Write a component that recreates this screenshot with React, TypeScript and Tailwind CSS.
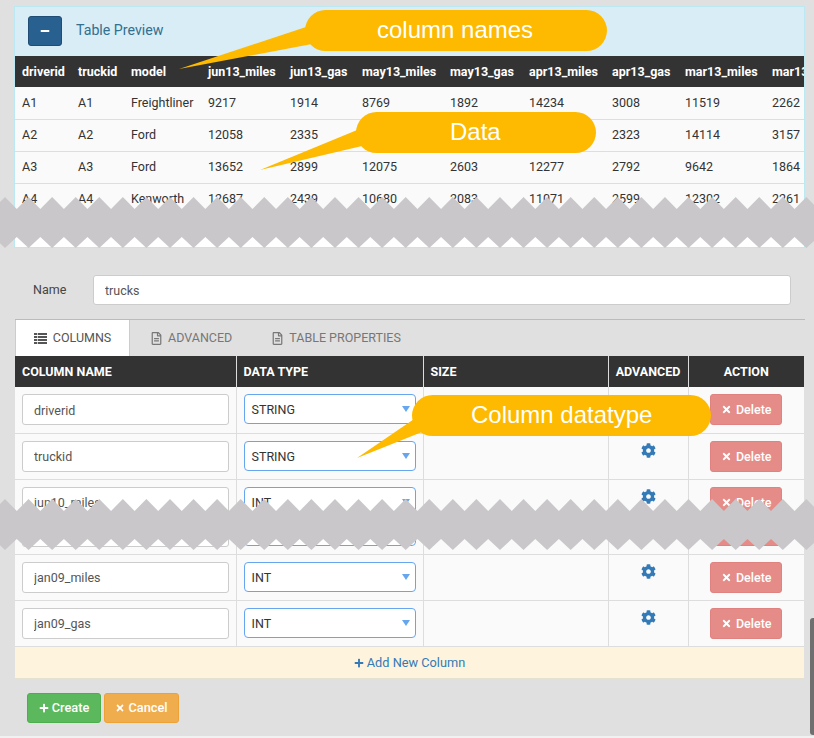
import React from "react";
import { FaCog, FaMinus, FaPlus, FaRegFileAlt, FaTimes } from "react-icons/fa";

const previewHead = ["driverid", "truckid", "model", "jun13_miles", "jun13_gas", "may13_miles", "may13_gas", "apr13_miles", "apr13_gas", "mar13_miles", "mar13_gas"];
const previewRows = [
  ["A1", "A1", "Freightliner", "9217", "1914", "8769", "1892", "14234", "3008", "11519", "2262"],
  ["A2", "A2", "Ford", "12058", "2335", "", "", "", "2323", "14114", "3157"],
  ["A3", "A3", "Ford", "13652", "2899", "12075", "2603", "12277", "2792", "9642", "1864"],
  ["A4", "A4", "Kenworth", "12687", "2439", "10680", "2083", "11071", "2599", "12302", "2261"],
];

const columns = [
  { name: "driverid", type: "STRING", tall: false },
  { name: "truckid", type: "STRING", tall: false },
  { name: "jun10_miles", type: "INT", tall: true },
  { name: "jan09_miles", type: "INT", tall: false },
  { name: "jan09_gas", type: "INT", tall: false },
];

const Band = ({ top }: { top: string }) => {
  const teeth = Array.from({ length: 36 }, (_, i) => i);
  const upper = teeth.map((i) => `${5 + i * 23.57 - 11.8},12 ${5 + i * 23.57},0`).join(" ");
  const lower = [...teeth].reverse().map((i) => `${5 + i * 23.57},51 ${5 + i * 23.57 - 11.8},40`).join(" ");
  return (
    <svg className={`absolute left-0 ${top}`} width="814" height="52" viewBox="0 0 814 52">
      <polygon points={`${upper} ${lower}`} fill="#c9c7ca" />
    </svg>
  );
};

const Callout = ({ box, text, tail, textClass }: { box: string; text: string; tail: string; textClass: string }) => (
  <>
    <svg className="absolute left-0 top-0" width="814" height="738" viewBox="0 0 814 738">
      <polygon points={tail} fill="#fdba00" />
    </svg>
    <div className={`absolute h-[41px] pb-[2px] rounded-[21px] bg-[#fdba00] flex items-center text-white text-[24px] font-['Liberation_Sans',sans-serif] ${box} ${textClass}`}>
      {text}
    </div>
  </>
);

const ListIcon = () => (
  <svg width="13" height="11" viewBox="0 0 13 11" fill="currentColor">
    <rect x="0" y="0" width="13" height="2" />
    <rect x="0" y="3" width="13" height="2" />
    <rect x="0" y="6" width="13" height="2" />
    <rect x="0" y="9" width="13" height="2" />
    <rect x="3" y="0" width="1" height="11" fill="#fff" opacity="0.7" />
  </svg>
);

export default function App() {
  return (
    <div className="relative w-[814px] h-[738px] overflow-hidden bg-[#e0e0e0] font-['Roboto',sans-serif] text-[12.5px] text-[#333]">
      {/* preview panel */}
      <div className="ml-[14px] mt-[6px] w-[791px] h-[242px] border border-[#bce8f1] bg-white overflow-hidden">
        <div className="h-[49px] bg-[#d9edf7] flex items-center pl-[13px] pb-[2px]">
          <button className="w-[34px] h-[30px] rounded-[3px] bg-[#286090] border border-[#204d74] text-white flex items-center justify-center">
            <FaMinus size={10} />
          </button>
          <span className="ml-[14px] text-[14.2px] text-[#31708f]">Table Preview</span>
        </div>
        <table className="table-fixed w-[840px]">
          <colgroup>
            <col className="w-[56px]" />
            <col className="w-[53px]" />
            <col className="w-[77px]" />
            <col className="w-[82px]" />
            <col className="w-[72px]" />
            <col className="w-[88px]" />
            <col className="w-[79px]" />
            <col className="w-[83px]" />
            <col className="w-[73px]" />
            <col className="w-[87px]" />
            <col className="w-[90px]" />
          </colgroup>
          <thead>
            <tr className="h-[31px] bg-[#333] text-white">
              {previewHead.map((h) => (
                <th key={h} className="pl-[7px] pt-[1px] text-left font-bold text-[12.5px] whitespace-nowrap overflow-hidden">
                  {h}
                </th>
              ))}
            </tr>
          </thead>
          <tbody>
            {previewRows.map((row) => (
              <tr key={row[0]} className="h-[32px] bg-[#fafafa] border-b border-[#dedede]">
                {row.map((cell, i) => (
                  <td key={i} className="pl-[7px] pt-[1px] whitespace-nowrap">
                    {cell}
                  </td>
                ))}
              </tr>
            ))}
          </tbody>
        </table>
      </div>

      {/* name */}
      <div className="mt-[27px] flex items-center ml-[33px] w-[758px]">
        <label className="w-[60px] text-[#444]">Name</label>
        <input
          readOnly
          value="trucks"
          className="flex-1 h-[30px] rounded-[3px] border border-[#ccc] bg-white pl-[11px] text-[12.5px] text-[#555]"
        />
      </div>

      {/* tabs */}
      <div className="mt-[14px] ml-[15px] w-[790px] h-[37px] border-t border-[#bbb] flex items-end text-[#777]">
        <div className="w-[115px] h-[36px] bg-white border-x border-[#ccc] flex items-center justify-center gap-[6px] text-[#555]">
          <ListIcon />
          COLUMNS
        </div>
        <div className="h-[36px] ml-[20px] flex items-center gap-[5px]">
          <FaRegFileAlt size={13} />
          ADVANCED
        </div>
        <div className="h-[36px] ml-[39px] flex items-center gap-[5px]">
          <FaRegFileAlt size={13} />
          TABLE PROPERTIES
        </div>
      </div>

      {/* columns table */}
      <table className="ml-[15px] table-fixed w-[789px]">
        <colgroup>
          <col className="w-[221px]" />
          <col className="w-[187px]" />
          <col className="w-[185px]" />
          <col className="w-[80px]" />
          <col className="w-[116px]" />
        </colgroup>
        <thead>
          <tr className="h-[31px] bg-[#333] text-white text-[12.5px] font-bold">
            <th className="pl-[7px] pt-[1px] text-left border-r border-[#ddd]">COLUMN NAME</th>
            <th className="pl-[7px] pt-[1px] text-left border-r border-[#ddd]">DATA TYPE</th>
            <th className="pl-[7px] pt-[1px] text-left border-r border-[#ddd]">SIZE</th>
            <th className="pt-[1px] text-center border-r border-[#ddd]">ADVANCED</th>
            <th className="pt-[1px] text-center">ACTION</th>
          </tr>
        </thead>
        <tbody>
          {columns.map((col) => (
            <tr key={col.name} className="bg-[#fafafa] border-b border-[#ddd]">
              <td className={`border-r border-[#ddd] pl-[7px] align-top ${col.tall ? "h-[75px]" : "h-[46px]"}`}>
                <input
                  readOnly
                  value={col.name}
                  className={`mt-[7px] w-[207px] rounded-[3px] border border-[#ccc] bg-white pl-[11px] text-[12.5px] text-[#555] ${col.tall ? "h-[60px] pb-[29px]" : "h-[31px] pt-[1px]"}`}
                />
              </td>
              <td className="border-r border-[#ddd] pl-[7px] align-top">
                <div className={`relative mt-[7px] w-[172px] rounded-[4px] border border-[#66a6ef] bg-white pl-[7px] flex items-start pt-[6px] text-[#333] ${col.tall ? "h-[59px]" : "h-[30px]"}`}>
                  {col.type}
                  <span className="absolute right-[5px] top-[11px] w-0 h-0 border-x-[4px] border-x-transparent border-t-[6px] border-t-[#66a6ef]" />
                </div>
              </td>
              <td className="border-r border-[#ddd]" />
              <td className="border-r border-[#ddd] align-top">
                <div className="mt-[9px] flex justify-center text-[#337ab7]">
                  <FaCog size={15} />
                </div>
              </td>
              <td className="align-top">
                <div className="flex justify-center">
                  <button className={`mt-[7px] w-[72px] rounded-[3px] border border-[#e08380] bg-[#e58c88] text-white font-medium flex items-start justify-center gap-[4px] pt-[6px] ${col.tall ? "h-[59px]" : "h-[31px]"}`}>
                    <FaTimes size={11} className="mt-[3px]" />
                    Delete
                  </button>
                </div>
              </td>
            </tr>
          ))}
        </tbody>
      </table>

      {/* add column */}
      <div className="ml-[15px] w-[789px] h-[32px] pt-[1px] bg-[#fef3dc] border-b border-[#e6e0d0] flex items-center justify-center gap-[3px] text-[12.75px] text-[#337ab7]">
        <FaPlus size={10} />
        Add New Column
      </div>

      {/* actions */}
      <div className="mt-[14px] ml-[27px] flex gap-[3px] text-white font-medium text-[12.75px]">
        <button className="w-[74px] h-[30px] rounded-[3px] bg-[#5cb85c] border border-[#4cae4c] flex items-center justify-center gap-[3px]">
          <FaPlus size={10} />
          Create
        </button>
        <button className="w-[75px] h-[30px] rounded-[3px] bg-[#f0ad4e] border border-[#eea236] flex items-center justify-center gap-[3px]">
          <FaTimes size={10} />
          Cancel
        </button>
      </div>

      {/* annotations */}
      <Band top="top-[197px]" />
      <Band top="top-[499px]" />
      <Callout
        box="left-[305px] top-[10px] w-[302px]"
        textClass="pl-[72px]"
        text="column names"
        tail="179,69 312,25 312,44"
      />
      <Callout
        box="left-[356px] top-[112px] w-[240px]"
        textClass="pl-[94px]"
        text="Data"
        tail="260,170 362,128 362,146"
      />
      <Callout
        box="left-[412px] top-[395px] w-[299px]"
        textClass="pl-[59px]"
        text="Column datatype"
        tail="357,458 420,415 422,432"
      />

      {/* scrollbar */}
      <div className="absolute right-0 top-[618px] w-[4px] h-[117px] rounded-l-[3px] bg-[#6f6f6f]" />
      <div className="absolute left-0 bottom-0 w-full h-[2px] bg-[#f1f1f1]" />
    </div>
  );
}
